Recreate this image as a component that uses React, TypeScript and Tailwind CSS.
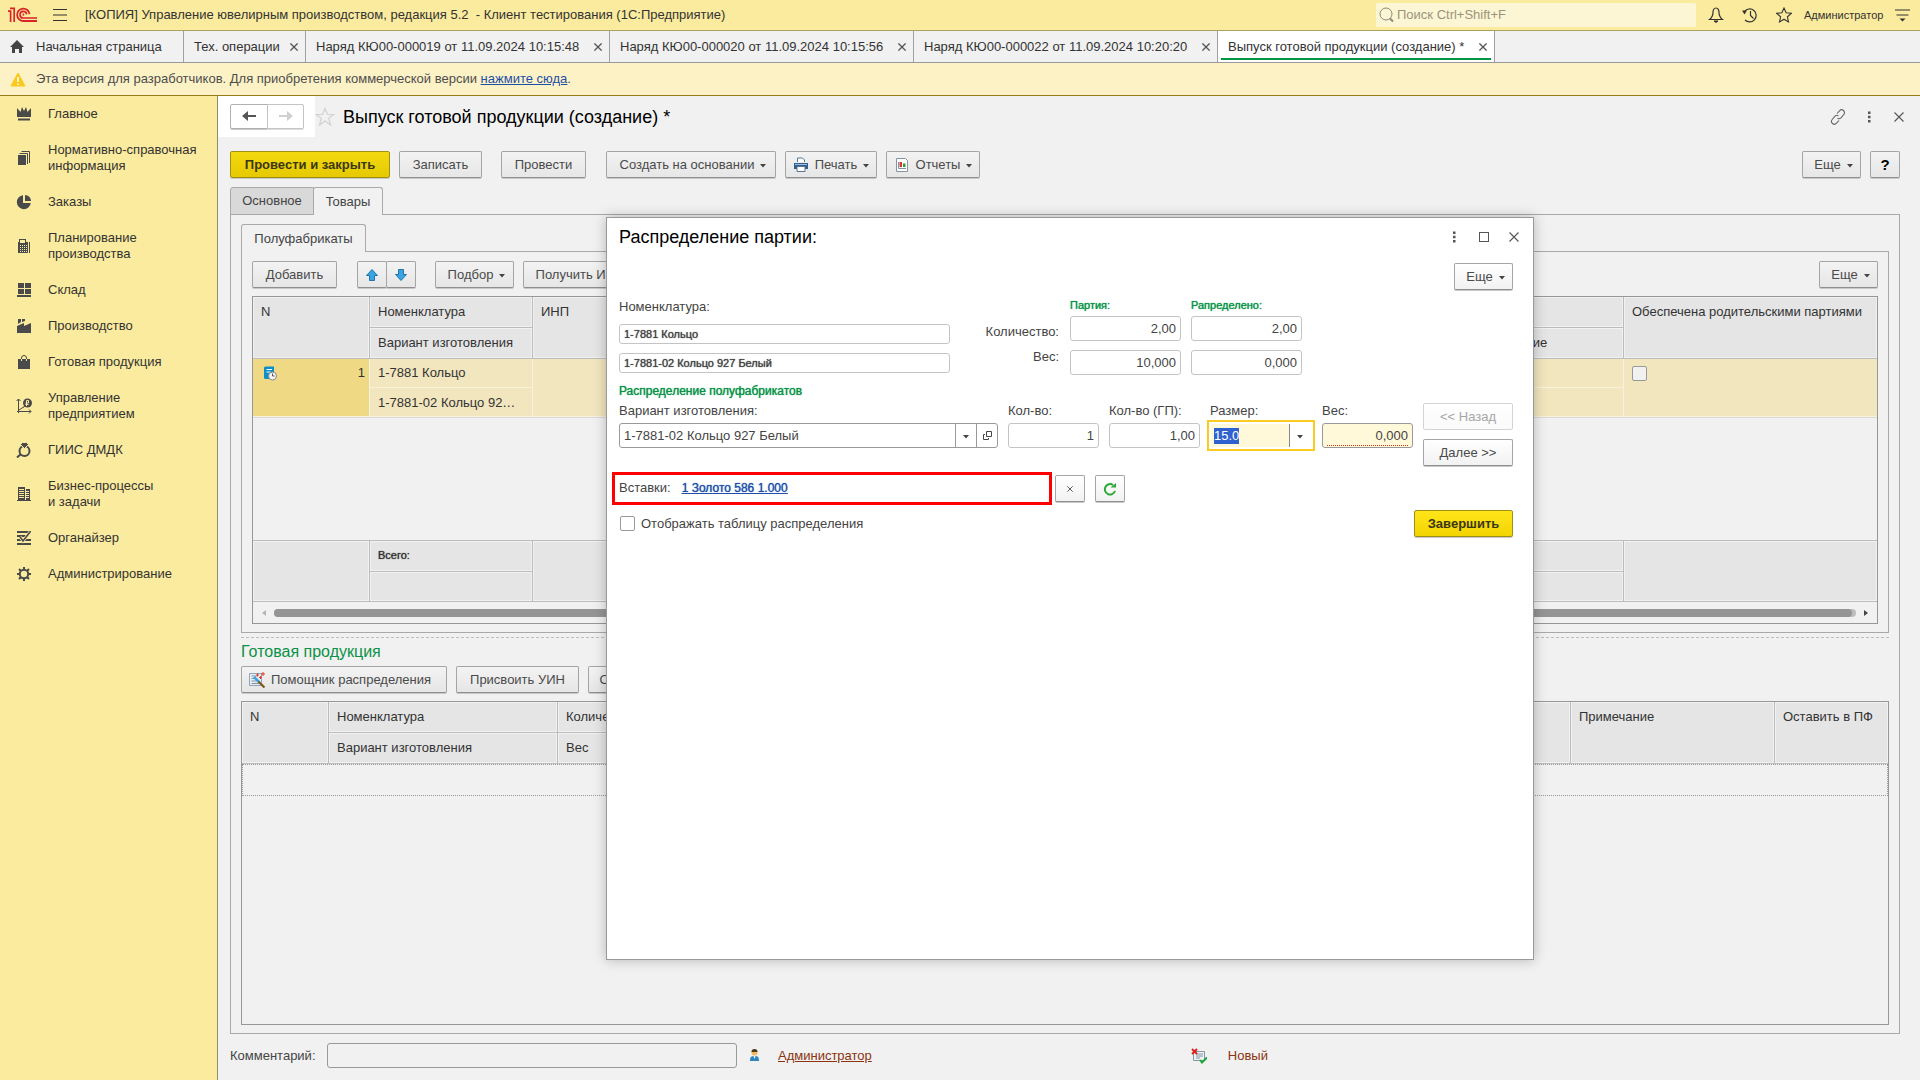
import { useEffect, useRef } from "react";
import type { ReactNode } from "react";
import clsx from "clsx";

/* ---------- Icons ---------- */

function Svg({ children, size = 16 }: { children: ReactNode; size?: number }) {
  return (
    <svg width={size} height={size} viewBox={`0 0 ${size} ${size}`} fill="none" className="shrink-0">
      {children}
    </svg>
  );
}

const Caret = () => (
  <svg width="6" height="6" viewBox="0 0 6 6" className="shrink-0">
    <path d="M0 2h6L3 5.5z" fill="#444" />
  </svg>
);

const Cross = ({ size = 10 }: { size?: number }) => (
  <svg width={size} height={size} viewBox="0 0 10 10" className="shrink-0">
    <path d="M.5.5l9 9M9.5.5l-9 9" stroke="#555" strokeWidth={size < 10 ? 1.6 : 1.1} />
  </svg>
);

const Dots = () => (
  <svg width="4" height="12" viewBox="0 0 4 12" className="shrink-0">
    <path d="M1 .5h2.500v2.500H1zM1 4.800h2.500v2.500H1zM1 9h2.500v2.500H1z" fill="#555" />
  </svg>
);

const Logo = () => (
  <svg width="30" height="16" viewBox="0 0 30 16" fill="none" stroke="#d8232a" className="shrink-0">
    <path d="M0 4.2h2.6V15M2 1.3h4.2V15" strokeWidth="1.7" />
    <path d="M21.5 7.2A6.2 6.2 0 1 0 15.5 14H29" strokeWidth="1.8" />
    <path d="M18.6 7.4A3.3 3.3 0 1 0 15.4 11H29" strokeWidth="1.6" />
    <path d="M15.4 6.6v2" strokeWidth="1.6" />
  </svg>
);

const sections: { title: string; icon: ReactNode }[] = [
  {
    title: "Главное",
    icon: <path d="M1 2l3.500 4L6 1l2 4 2-4 1.500 5L15 2v9H1zM2 12.500h12v2H2z" fill="#4a4a4a" />,
  },
  {
    title: "Нормативно-справочная\nинформация",
    icon: (
      <>
        <path d="M2 5h8v10H2z" fill="#4a4a4a" />
        <path d="M3.500 3.500h8V14M5.500 1.500h8V13" stroke="#4a4a4a" />
      </>
    ),
  },
  {
    title: "Заказы",
    icon: (
      <>
        <path d="M7 1.2A7 7 0 1 0 14.8 9H7z" fill="#4a4a4a" />
        <path d="M9 1a6 6 0 0 1 6 6H9z" fill="#4a4a4a" />
      </>
    ),
  },
  {
    title: "Планирование\nпроизводства",
    icon: (
      <>
        <path d="M2 4h1V1h7v3h2v11H2z" fill="#4a4a4a" />
        <path d="M4 2h5v3H4zM4 7h1v1H4zM6 7h1v1H6zM8 7h1v1H8zM10 7h1v1h-1zM4 9h1v1H4zM6 9h1v1H6zM8 9h1v1H8zM10 9h1v1h-1zM4 11h1v1H4zM6 11h1v1H6zM8 11h1v1H8zM10 11h1v1h-1zM4 13h1v1H4zM6 13h1v1H6zM8 13h1v1H8zM10 13h1v1h-1z" fill="#fbeb9e" />
        <path d="M13.500 4v11" stroke="#4a4a4a" />
      </>
    ),
  },
  {
    title: "Склад",
    icon: <path d="M2 1h6v5H2zM9 1h6v5H9zM2 7h6v5H2zM9 7h6v5H9zM1 13h14v2H1z" fill="#4a4a4a" />,
  },
  {
    title: "Производство",
    icon: <path d="M2 1h3v3l-3 2zM6 1h3v2L6 4zM1 15V8l7-3v3l7-3v10z" fill="#4a4a4a" />,
  },
  {
    title: "Готовая продукция",
    icon: (
      <>
        <path d="M2 5h12v10H2z" fill="#4a4a4a" />
        <path d="M5.500 5V4a2.500 2.500 0 0 1 5 0v1" stroke="#4a4a4a" />
        <path d="M5.500 5v2M10.500 5v2" stroke="#fbeb9e" />
      </>
    ),
  },
  {
    title: "Управление\nпредприятием",
    icon: (
      <>
        <path d="M2.500 15V1M.5 3l2-2 2 2M1 13.500h14M13 11.500l2 2-2 2M3 12l3-2 2-1 1-2" stroke="#4a4a4a" />
        <circle cx="11.500" cy="5" r="4.500" fill="#4a4a4a" />
        <path d="M10.500 8V2.500h2v2.500h-3M9.500 6.500h3" stroke="#fbeb9e" />
      </>
    ),
  },
  {
    title: "ГИИС ДМДК",
    icon: (
      <>
        <circle cx="8.500" cy="9" r="5" stroke="#4a4a4a" strokeWidth="2" />
        <path d="M4.500 2.500L6.500.5h4l2 2-4 4z" fill="#4a4a4a" stroke="#fbeb9e" />
        <path d="M5 12l-4 3.500" stroke="#4a4a4a" strokeWidth="2" />
      </>
    ),
  },
  {
    title: "Бизнес-процессы\nи задачи",
    icon: (
      <>
        <path d="M2 1h7v14H2zM10 3h4v12h-4z" fill="#4a4a4a" />
        <path d="M3 3.500h5M3 5.500h5M3 7.500h5M3 9.500h5M3 11.500h5M10 5.500h3M10 7.500h3M10 9.500h3M10 11.500h3" stroke="#fbeb9e" />
        <path d="M1 14.500h14" stroke="#4a4a4a" />
      </>
    ),
  },
  {
    title: "Органайзер",
    icon: (
      <>
        <path d="M1 2h14M1 6h10M1 10h14M1 14h14" stroke="#4a4a4a" strokeWidth="2" />
        <path d="M4 7l3 4 7-9" stroke="#fbeb9e" strokeWidth="3" />
        <path d="M4 7l3 4 7-9" stroke="#4a4a4a" strokeWidth="1.600" />
      </>
    ),
  },
  {
    title: "Администрирование",
    icon: (
      <>
        <circle cx="8" cy="8" r="4.200" stroke="#4a4a4a" strokeWidth="2" />
        <path d="M8 1v3M8 12v3M1 8h3M12 8h3M3 3l2 2M11 11l2 2M13 3l-2 2M5 11l-2 2" stroke="#4a4a4a" strokeWidth="2" />
      </>
    ),
  },
];

/* ---------- Controls ---------- */

const strong = "[text-shadow:0_0_1px_currentColor]";

function Btn({
  children,
  className,
  white,
  primary,
  ...rest
}: {
  children: ReactNode;
  className?: string;
  white?: boolean;
  primary?: boolean;
} & React.ButtonHTMLAttributes<HTMLButtonElement>) {
  return (
    <button
      type="button"
      className={clsx(
        "flex h-[27px] shrink-0 items-center justify-center overflow-hidden rounded-xs border whitespace-nowrap shadow-[0_1px_0_#c8c8c8]",
        primary && "border-[#a18f14] bg-linear-to-b font-bold text-[#3c3714]",
        primary && (white ? "from-[#ffe619] to-[#f2d400]" : "from-[#f3da10] to-[#e6c900]"),
        !primary && "border-[#a5a5a5] border-b-[#8f8f8f] bg-linear-to-b text-[#4a4a4a]",
        !primary && (white ? "from-white to-[#f2f2f2]" : "from-[#f3f3f3] to-[#e6e6e6]"),
        "disabled:border-[#d4d4d4] disabled:from-white disabled:to-[#fafafa] disabled:text-[#a6a6a6] disabled:shadow-none",
        className
      )}
      {...rest}
    >
      {children}
    </button>
  );
}

function MoreBtn({ white }: { white?: boolean }) {
  return (
    <Btn white={white} className="w-[59px] gap-1.5 pl-1">
      Еще <Caret />
    </Btn>
  );
}

function NumField({ id, label, value, className }: { id: string; label?: string; value: string; className?: string }) {
  return (
    <input
      id={id}
      aria-label={label}
      defaultValue={value}
      className={clsx("h-[25px] rounded-[3px] border border-[#c4c4c4] bg-white px-1 text-right text-[#444] outline-none", className)}
    />
  );
}

/* ---------- Window chrome ---------- */

function TitleBar() {
  return (
    <header className="flex h-[31px] items-center border-b border-[#aaa25f] bg-[#fbeb9e] pr-2.5 pl-2 text-[#333]">
      <Logo />
      <button type="button" aria-label="Меню" className="ml-[15px]">
        <svg width="14" height="12" viewBox="0 0 14 12">
          <path d="M0 .5h14M0 6h14M0 11.500h14" stroke="#333" strokeWidth="1.200" />
        </svg>
      </button>
      <h1 className="ml-[18px] flex-1 whitespace-pre">
        [КОПИЯ] Управление ювелирным производством, редакция 5.2&nbsp; - Клиент тестирования (1С:Предприятие)
      </h1>
      <div className="flex h-[24px] w-[320px] items-center gap-[3px] rounded-xs bg-[#fdf6d5] pl-[3px]">
        <svg width="15" height="16" viewBox="0 0 15 16" fill="none" stroke="#8d8a77">
          <circle cx="7" cy="7" r="6" />
          <path d="M11 11.500l3 3" strokeWidth="2" />
        </svg>
        <input
          aria-label="Поиск"
          placeholder="Поиск Ctrl+Shift+F"
          className="flex-1 bg-transparent outline-none placeholder:text-[#99947a]"
        />
      </div>
      <button type="button" aria-label="Уведомления" className="ml-3">
        <Svg>
          <path d="M8 1c-2 0-3 2-3 4.500 0 3-1 5-3.500 7h13C12 10.500 11 8.500 11 5.500 11 3 10 1 8 1z" stroke="#333" strokeWidth="1.200" />
          <path d="M6 14h4l-2 1.500z" fill="#333" stroke="#333" />
        </Svg>
      </button>
      <button type="button" aria-label="История" className="ml-[18px]">
        <Svg>
          <path d="M2.500 4.500A6.500 6.500 0 1 1 3 13" stroke="#333" strokeWidth="1.200" />
          <path d="M0 3.500h5L2.500 7.500z" fill="#333" />
          <path d="M8.500 4v4.500l3 3" stroke="#333" strokeWidth="1.200" />
        </Svg>
      </button>
      <button type="button" aria-label="Избранное" className="ml-[18px]">
        <Svg>
          <path d="M8 1l2.100 4.800 5.200.5-3.900 3.500 1.100 5.100L8 12.200l-4.500 2.700 1.100-5.100L.7 6.300l5.200-.5z" stroke="#333" strokeWidth="1.100" />
        </Svg>
      </button>
      <button type="button" className="ml-3 w-[79px] text-left text-[11px]">
        Администратор
      </button>
      <button type="button" aria-label="Сервис" className="ml-3">
        <svg width="15" height="13" viewBox="0 0 15 13">
          <path d="M0 1h15M1.500 6h12" stroke="#333" strokeWidth="1.200" />
          <path d="M4.500 9.500h6l-3 3z" fill="#333" />
        </svg>
      </button>
    </header>
  );
}

const openTabs = [
  { title: "Тех. операции", width: "w-[122px]" },
  { title: "Наряд КЮ00-000019 от 11.09.2024 10:15:48", width: "w-[304px]" },
  { title: "Наряд КЮ00-000020 от 11.09.2024 10:15:56", width: "w-[304px]" },
  { title: "Наряд КЮ00-000022 от 11.09.2024 10:20:20", width: "w-[304px]" },
  { title: "Выпуск готовой продукции (создание) *", width: "w-[277px]", active: true },
];

function TabBar() {
  return (
    <nav className="flex h-8 border-b border-[#999] bg-[#f1f1f1] text-[#333]">
      <a href="#home" className="flex w-[184px] items-center border-r border-[#a0a0a0] pl-2.5">
        <svg width="14" height="13" viewBox="0 0 14 13">
          <path d="M7 0l7 7h-2v6H9V9H5v4H2V7H0z" fill="#444" />
        </svg>
        <span className="ml-3">Начальная страница</span>
      </a>
      {openTabs.map((tab) => (
        <div key={tab.title} className={clsx("flex border-r border-[#a0a0a0]", tab.width, tab.active && "bg-white")}>
          <div
            className={clsx(
              "mx-[3px] mb-0.5 flex flex-1 items-center justify-between border-b-2 pt-1 pr-1 pl-[7px] whitespace-nowrap",
              tab.active ? "border-[#009646]" : "border-transparent"
            )}
          >
            <a href="#tab">{tab.title}</a>
            <button type="button" aria-label="Закрыть">
              <Cross size={8} />
            </button>
          </div>
        </div>
      ))}
    </nav>
  );
}

function Sidebar() {
  return (
    <aside className="w-[218px] shrink-0 border-r border-[#8f8c6b] bg-[#fbeb9e] text-[#333]">
      {sections.map((s) => (
        <a key={s.title} href="#section" className="flex items-center py-2.5 pl-4 leading-4 whitespace-pre">
          <Svg>{s.icon}</Svg>
          <span className="ml-4">{s.title}</span>
        </a>
      ))}
    </aside>
  );
}

/* ---------- Tables ---------- */

const thBase = "border-r border-b border-[#bcbcbc] bg-[#e5e5e5] px-2 pt-[7px] text-left align-top font-normal shadow-[inset_0_0_0_1px_#f1f1f1]";
const th = clsx(thBase, "last:border-r-0");
const tdBase = "border-r border-b border-[#f8f2dc] bg-[#f2e6be] px-2";
const td = clsx(tdBase, "last:border-r-0");

function MaterialsTable() {
  return (
    <div className="mt-2 border border-[#979797]">
      <table className="w-full table-fixed border-separate border-spacing-0 text-[#333]">
        <colgroup>
          <col className="w-[117px]" />
          <col className="w-[163px]" />
          <col className="w-[160px]" />
          <col />
          <col className="w-[160px]" />
          <col className="w-[253px]" />
        </colgroup>
        <thead>
          <tr className="h-[31px]">
            <th rowSpan={2} className={th}>N</th>
            <th className={th}>Номенклатура</th>
            <th rowSpan={2} className={th}>ИНП</th>
            <th rowSpan={2} className={th}></th>
            <th className={th}></th>
            <th rowSpan={2} className={clsx(th, "whitespace-nowrap")}>Обеспечена родительскими партиями</th>
          </tr>
          <tr className="h-[31px]">
            <th className={th}>Вариант изготовления</th>
            <th className={thBase}>Примечание</th>
          </tr>
        </thead>
        <tbody>
          <tr className="h-[29px]">
            <td rowSpan={2} className="border-r border-b border-[#f8f2dc] bg-[#efd985] px-1 pt-1.5 align-top">
              <div className="flex items-start justify-between pl-1.5">
                <Svg>
                  <path d="M1 3a1.500 1.500 0 0 1 1.500-1.500H11V14H2.500A1.500 1.500 0 0 1 1 12.500z" fill="#0a8fc9" />
                  <path d="M3.500 4.500h5.500M3.500 7h4" stroke="#fff" />
                  <circle cx="9.500" cy="11" r="4" fill="#f4f4f4" stroke="#888" />
                  <path d="M9.500 8.500V11h2" stroke="#555" />
                </Svg>
                <span>1</span>
              </div>
            </td>
            <td className={td}>1-7881 Кольцо</td>
            <td rowSpan={2} className={td}></td>
            <td rowSpan={2} className={td}></td>
            <td className={td}></td>
            <td rowSpan={2} className={clsx(td, "pt-[7px] align-top")}>
              <input
                type="checkbox"
                aria-label="Обеспечена родительскими партиями"
                className="block size-[15px] appearance-none rounded-xs border border-[#999] bg-[#f1f1f1]"
              />
            </td>
          </tr>
          <tr className="h-[29px]">
            <td className={clsx(td, "truncate pt-0.5")}>1-7881-02 Кольцо 92…</td>
            <td className={tdBase}></td>
          </tr>
          <tr className="h-[124px]">
            <td colSpan={6} className="border-y border-t-[#d8d8d8] border-b-[#bcbcbc]"></td>
          </tr>
        </tbody>
        <tfoot>
          <tr className="h-[31px]">
            <td rowSpan={2} className={th}></td>
            <td className={th}>
              <span className={clsx("block text-[11px] leading-[14px]", strong)}>Всего:</span>
            </td>
            <td rowSpan={2} className={th}></td>
            <td rowSpan={2} className={th}></td>
            <td className={th}></td>
            <td rowSpan={2} className={th}></td>
          </tr>
          <tr className="h-[30px]">
            <td className={th}></td>
            <td className={thBase}></td>
          </tr>
        </tfoot>
      </table>
      <div className="flex h-[21px] items-center px-[9px]">
        <svg width="4" height="6" viewBox="0 0 4 6">
          <path d="M4 0v6L0 3z" fill="#b5b5b5" />
        </svg>
        <div className="mx-2 h-2 flex-1 rounded-full bg-[#bdbdbd] pr-1">
          <div className="h-full rounded-full bg-[#959595]"></div>
        </div>
        <svg width="4" height="6" viewBox="0 0 4 6">
          <path d="M0 0v6l4-3z" fill="#444" />
        </svg>
      </div>
    </div>
  );
}

function ProductsTable() {
  return (
    <div className="mt-2 flex-1 border border-[#979797]">
      <table className="w-full table-fixed border-separate border-spacing-0 text-[#333]">
        <colgroup>
          <col className="w-[87px]" />
          <col className="w-[229px]" />
          <col className="w-[180px]" />
          <col />
          <col className="w-[204px]" />
          <col className="w-[113px]" />
        </colgroup>
        <thead>
          <tr className="h-[31px]">
            <th rowSpan={2} className={th}>N</th>
            <th className={th}>Номенклатура</th>
            <th className={th}>Количество</th>
            <th rowSpan={2} className={th}></th>
            <th rowSpan={2} className={th}>Примечание</th>
            <th rowSpan={2} className={clsx(th, "whitespace-nowrap")}>Оставить в ПФ</th>
          </tr>
          <tr className="h-[31px]">
            <th className={th}>Вариант изготовления</th>
            <th className={thBase}>Вес</th>
          </tr>
        </thead>
        <tbody>
          <tr className="h-8">
            <td colSpan={6} className="border border-dotted border-[#999]"></td>
          </tr>
        </tbody>
      </table>
    </div>
  );
}

/* ---------- Distribution dialog ---------- */

function DistributionDialog() {
  const sizeRef = useRef<HTMLInputElement>(null);

  useEffect(() => {
    sizeRef.current?.focus();
    sizeRef.current?.select();
  }, []);

  const nameField = clsx("mt-[9px] h-5 rounded-[3px] border border-[#c4c4c4] px-1 text-[11px] outline-none", strong);
  const caption = clsx("text-[11px] leading-4 text-[#0a9147]", strong);

  return (
    <div
      role="dialog"
      aria-label="Распределение партии"
      className="absolute top-[121px] left-[388px] h-[743px] w-[928px] border border-[#999] bg-white pr-5 pl-3 text-[#444] shadow-[0_0_12px_rgba(0,0,0,0.25)]"
    >
      <div className="flex h-[38px] items-center">
        <h2 className="flex-1 text-[18px] text-black">Распределение партии:</h2>
        <div className="-mr-4 flex items-center">
          <button type="button" aria-label="Действия" className="flex w-[30px] justify-center"><Dots /></button>
          <button type="button" aria-label="Развернуть" className="flex w-[30px] justify-center">
            <span className="block size-2.5 border border-[#555]"></span>
          </button>
          <button type="button" aria-label="Закрыть" className="flex w-[30px] justify-center"><Cross /></button>
        </div>
      </div>
      <div className="mt-[7px] flex justify-end">
        <MoreBtn white />
      </div>

      <div className="mt-[7px] flex items-start">
        <div className="flex w-[331px] flex-col pt-0.5">
          <label htmlFor="item" className="leading-4">Номенклатура:</label>
          <input id="item" defaultValue="1-7881 Кольцо" className={nameField} />
          <input aria-label="Вариант" defaultValue="1-7881-02 Кольцо 927 Белый" className={nameField} />
        </div>
        <div className="ml-[35px] flex w-[74px] flex-col items-end gap-[9px] pt-[27px] leading-4">
          <label htmlFor="batch-qty">Количество:</label>
          <label htmlFor="batch-weight">Вес:</label>
        </div>
        <div className="ml-[11px] flex w-[111px] flex-col">
          <span className={caption}>Партия:</span>
          <NumField id="batch-qty" value="2,00" className="mt-[3px]" />
          <NumField id="batch-weight" value="10,000" className="mt-[9px]" />
        </div>
        <div className="ml-2.5 flex w-[111px] flex-col">
          <span className={caption}>Рапределено:</span>
          <NumField id="done-qty" label="Распределено, количество" value="2,00" className="mt-[3px]" />
          <NumField id="done-weight" label="Распределено, вес" value="0,000" className="mt-[9px]" />
        </div>
      </div>

      <h3 className={clsx("mt-2 text-[12px] leading-4 text-[#0a9147]", strong)}>Распределение полуфабрикатов</h3>
      <div className="mt-1 flex items-start gap-2.5 leading-4">
        <div className="w-[379px]">
          <label htmlFor="variant" className="block">Вариант изготовления:</label>
          <div className="mt-1 flex h-[25px] rounded-[3px] border border-[#999]">
            <input id="variant" defaultValue="1-7881-02 Кольцо 927 Белый" className="min-w-0 flex-1 px-1 outline-none" />
            <button type="button" aria-label="Выбрать" className="flex w-[21px] items-center justify-center border-l border-[#999]">
              <Caret />
            </button>
            <button type="button" aria-label="Открыть" className="flex w-[21px] items-center justify-center border-l border-[#999]">
              <svg width="9" height="9" viewBox="0 0 9 9" fill="none" stroke="#444">
                <path d="M3.500.5h5v5h-5zM2 3.500H.5v5h5V7" />
              </svg>
            </button>
          </div>
        </div>
        <div className="flex w-[91px] flex-col">
          <label htmlFor="qty">Кол-во:</label>
          <NumField id="qty" value="1" className="mt-1" />
        </div>
        <div className="flex w-[91px] flex-col">
          <label htmlFor="qty-gp">Кол-во (ГП):</label>
          <NumField id="qty-gp" value="1,00" className="mt-1" />
        </div>
        <div className="-mx-[3px] w-[108px]">
          <label htmlFor="size" className="block pl-[3px]">Размер:</label>
          <div className="mt-px flex h-[31px] border-2 border-[#fbcb1f] p-0.5">
            <input
              id="size"
              ref={sizeRef}
              defaultValue="15.0"
              className="w-[78px] bg-[#fff9da] px-[3px] outline-none selection:bg-[#2f62cf] selection:text-white"
            />
            <button type="button" aria-label="Выбрать размер" className="flex w-[21px] items-center justify-center border-l border-[#888]">
              <Caret />
            </button>
          </div>
        </div>
        <div className="flex w-[91px] flex-col">
          <label htmlFor="weight">Вес:</label>
          <div className="mt-1 flex h-[25px] rounded-[3px] border border-[#999] bg-[#fff9da] px-1 pb-px">
            <input id="weight" defaultValue="0,000" className="w-full border-b border-dotted border-[#e0301e] pt-0.5 text-right outline-none" />
          </div>
        </div>
        <div className="flex w-[90px] flex-col gap-[9px]">
          <Btn white disabled>&lt;&lt; Назад</Btn>
          <Btn white>Далее &gt;&gt;</Btn>
        </div>
      </div>

      <div className="mt-1.5 -ml-[7px] flex items-center">
        <div className="flex h-[33px] w-[440px] items-center border-3 border-[#f00] pb-0.5 pl-1">
          <span>Вставки:</span>
          <a href="#insert" className={clsx("ml-[11px] text-[12px] text-[#1e4fa8] underline", strong)}>1 Золото 586 1.000</a>
        </div>
        <Btn white aria-label="Очистить" className="ml-[3px] w-[30px]"><Cross size={6} /></Btn>
        <Btn white aria-label="Обновить" className="ml-2.5 w-[30px]">
          <svg width="14" height="14" viewBox="0 0 14 14" fill="none">
            <path d="M12 9A5.200 5.200 0 1 1 10 3" stroke="#2ea836" strokeWidth="2" />
            <path d="M7.500 5.500h5.500V1z" fill="#2ea836" />
          </svg>
        </Btn>
      </div>

      <div className="mt-[5px] flex items-center justify-between">
        <label className="flex items-center gap-1.5">
          <input type="checkbox" className="ml-px size-[15px] appearance-none rounded-xs border border-[#999] bg-white" />
          Отображать таблицу распределения
        </label>
        <Btn primary white className="w-[99px]">Завершить</Btn>
      </div>
    </div>
  );
}

/* ---------- Document form ---------- */

function DocumentForm() {
  return (
    <main className="relative flex min-w-0 flex-1 flex-col bg-[#f1f1f1]">
      <div className="flex h-[41px] items-center pr-4">
        <div className="flex h-full w-[97px] items-center bg-white pb-px pl-3">
          <button type="button" aria-label="Назад" className="flex h-[25px] w-[38px] items-center justify-center rounded-l-xs border border-[#b0b0b0] shadow-[0_1px_0_#c8c8c8]">
            <svg width="14" height="12" viewBox="0 0 14 12">
              <path d="M0 6l6-5v4h8v2H6v4z" fill="#555" />
            </svg>
          </button>
          <button type="button" aria-label="Вперед" className="-ml-px flex h-[25px] w-[37px] items-center justify-center rounded-r-xs border border-[#c4c4c4] shadow-[0_1px_0_#ddd]">
            <svg width="14" height="12" viewBox="0 0 14 12">
              <path d="M14 6L8 1v4H0v2h8v4z" fill="#d0d0d0" />
            </svg>
          </button>
        </div>
        <button type="button" aria-label="В избранное">
          <svg width="20" height="20" viewBox="0 0 20 20" fill="none">
            <path d="M10 1.500l2.500 6h6.200l-5 3.900 1.900 6.600L10 14l-5.600 4 1.900-6.600-5-3.900h6.200z" stroke="#d2d2d2" strokeWidth="1.200" />
          </svg>
        </button>
        <h2 className="ml-2 flex-1 text-[18px] text-black">Выпуск готовой продукции (создание) *</h2>
        <div className="flex items-center">
          <button type="button" aria-label="Получить ссылку" className="mr-[21px]">
            <Svg>
              <g stroke="#666" strokeWidth="1.100">
                <path d="M7 4.500l2.500-2.700a2.800 2.800 0 0 1 4.300 3.700L11 8.800a2.800 2.800 0 0 1-3.500.4" />
                <path d="M9 11.500l-2.500 2.700a2.800 2.800 0 0 1-4.300-3.700L5 7.200a2.800 2.800 0 0 1 3.500-.4" />
              </g>
            </Svg>
          </button>
          <button type="button" aria-label="Действия" className="mr-[23px]"><Dots /></button>
          <button type="button" aria-label="Закрыть"><Cross /></button>
        </div>
      </div>

      <div className="flex flex-1 flex-col pr-5 pl-3">
        <div className="mt-3.5 flex">
          <Btn primary className="w-[160px]">Провести и закрыть</Btn>
          <Btn className="ml-[9px] w-[83px]">Записать</Btn>
          <Btn className="ml-[19px] w-[85px]">Провести</Btn>
          <Btn className="ml-5 w-[170px] gap-1.5 pl-1">Создать на основании <Caret /></Btn>
          <Btn className="ml-[9px] w-[92px] gap-1.5">
            <Svg>
              <path d="M4.500 5V1h5l2 2v2" fill="#fff" stroke="#5b7590" />
              <path d="M1 6h14v6H1z" fill="#2f5f8c" />
              <path d="M2 7.500h12" stroke="#9fc0dc" />
              <path d="M4 9.500h8v5H4z" fill="#fff" stroke="#5b7590" />
            </Svg>
            Печать <Caret />
          </Btn>
          <Btn className="ml-[9px] w-[94px] gap-1.5">
            <Svg>
              <path d="M2.500 1.500h9l2 2v11h-11z" fill="#fff" stroke="#8594a3" />
              <path d="M4.500 5v6.500H12" stroke="#8594a3" />
              <path d="M5.500 5h2.500v5H5.500z" fill="#d33" />
              <path d="M9 6.500h2.500V10H9z" fill="#2a9d3a" />
            </Svg>
            Отчеты <Caret />
          </Btn>
          <div className="ml-auto flex gap-[9px]">
            <MoreBtn />
            <Btn className="w-[30px] text-[15px] font-bold text-black">?</Btn>
          </div>
        </div>

        <div className="relative z-0 mt-[9px] -mb-px flex">
          <button type="button" className="h-7 w-[84px] rounded-tl-[3px] border border-[#a9a9a9] bg-[#d9d9d9] text-[#444]">Основное</button>
          <button type="button" className="-ml-px h-7 w-[70px] rounded-t-[3px] border border-b-0 border-[#a9a9a9] bg-[#f1f1f1] text-[#444]">Товары</button>
        </div>
        <div className="flex flex-1 flex-col border border-[#a9a9a9] px-2.5 pt-[9px] pb-2">
          <div className="z-0 -mb-px flex">
            <button type="button" className="h-7 w-[125px] rounded-t-[3px] border border-b-0 border-[#a9a9a9] bg-[#f1f1f1] text-[#444]">Полуфабрикаты</button>
          </div>
          <div className="border border-[#a9a9a9] px-2.5 pt-[9px] pb-2">
            <div className="flex">
              <Btn className="w-[85px]">Добавить</Btn>
              <Btn aria-label="Вверх" className="ml-5 w-[30px]">
                <svg width="12" height="12" viewBox="0 0 12 12">
                  <path d="M6 .5l5.500 6H8.500v5h-5v-5H.5z" fill="#3ba3e0" stroke="#1f75ad" />
                </svg>
              </Btn>
              <Btn aria-label="Вниз" className="-ml-px w-[30px]">
                <svg width="12" height="12" viewBox="0 0 12 12">
                  <path d="M6 11.500l5.500-6H8.500v-5h-5v5H.5z" fill="#3ba3e0" stroke="#1f75ad" />
                </svg>
              </Btn>
              <Btn className="ml-[19px] w-[79px] gap-1.5 pl-1">Подбор <Caret /></Btn>
              <Btn className="ml-[9px] w-[114px]">Получить ИНП</Btn>
              <div className="ml-auto">
                <MoreBtn />
              </div>
            </div>
            <MaterialsTable />
          </div>

          <div className="mt-1 border-t border-dashed border-[#bbb]"></div>
          <h3 className="mt-1 text-[16px] leading-5 text-[#0a9147]">Готовая продукция</h3>
          <div className="mt-1 flex">
            <Btn className="w-[206px] gap-1.5 pr-2">
              <Svg>
                <path d="M.5 1.500h12v12H.5z" fill="#e8eef3" stroke="#8fa3b5" />
                <path d="M2.500 4h5M2.500 6.500h5M2.500 9h6M2.500 11.500h8" stroke="#7f93a5" />
                <path d="M5 5l5 5" stroke="#3ba3e0" strokeWidth="2.500" />
                <path d="M9.500 9.500l6 6" stroke="#7a5a16" strokeWidth="2.200" />
                <path d="M7 3h3M8.500 1.500v3M12 2h4M14 0v4M10 5.500h3M11.500 4v3" stroke="#e03a2a" />
              </Svg>
              Помощник распределения
            </Btn>
            <Btn className="ml-[9px] w-[123px]">Присвоить УИН</Btn>
            <Btn className="ml-[9px] w-[110px]">Очистить УИН</Btn>
          </div>
          <ProductsTable />
        </div>

        <footer className="flex items-center pt-[9px] pb-3 text-[#444]">
          <label htmlFor="comment" className="w-[97px]">Комментарий:</label>
          <input id="comment" className="h-[25px] w-[410px] rounded-[3px] border border-[#999] bg-transparent px-1 outline-none" />
          <div className="ml-[11px]">
            <Svg>
              <circle cx="6.500" cy="4.500" r="3" fill="#f0b95a" />
              <path d="M3.500 4a3 3 0 0 1 6 0z" fill="#4a3a20" />
              <path d="M2 13c0-4 1-5 4.500-5S11 9 11 13z" fill="#2e86c1" />
              <path d="M5.500 8h2l-1 3z" fill="#fff" />
            </Svg>
          </div>
          <a href="#user" className="ml-3.5 text-[#8c3310] underline">Администратор</a>
          <div className="ml-[319px] flex items-center gap-[21px] text-[#8c3310]">
            <Svg>
              <path d="M2.500 3.500h11v9h-11z" fill="#eef1f4" stroke="#8696a6" />
              <path d="M5 6h7M5 8h7M5 10h4" stroke="#8696a6" />
              <path d="M1 1l5 5M6 1L1 6" stroke="#d22" strokeWidth="2" />
              <path d="M9 12l2 2.500 5-5" stroke="#1fa838" strokeWidth="2" />
            </Svg>
            Новый
          </div>
        </footer>
      </div>

      <DistributionDialog />
    </main>
  );
}

export default function App() {
  return (
    <div className="flex min-h-screen flex-col bg-[#f1f1f1] font-['Liberation_Sans',Arial,sans-serif] text-[13px] leading-4">
      <TitleBar />
      <TabBar />
      <div className="flex h-[33px] items-center border-b border-[#937c1c] bg-[#fdf2c5] pl-2.5 text-[#4d4d4d]">
        <svg width="16" height="15" viewBox="0 0 16 15">
          <path d="M8 1l7 13H1z" fill="#fbc91e" stroke="#fbc91e" strokeLinejoin="round" />
          <path d="M8 5v5M8 11.500v1.500" stroke="#fff" strokeWidth="1.500" />
        </svg>
        <p className="ml-2.5">
          Эта версия для разработчиков. Для приобретения коммерческой версии{" "}
          <a href="#buy" className="text-[#1e4fa8] underline">нажмите сюда</a>.
        </p>
      </div>
      <div className="flex flex-1">
        <Sidebar />
        <DocumentForm />
      </div>
    </div>
  );
}
